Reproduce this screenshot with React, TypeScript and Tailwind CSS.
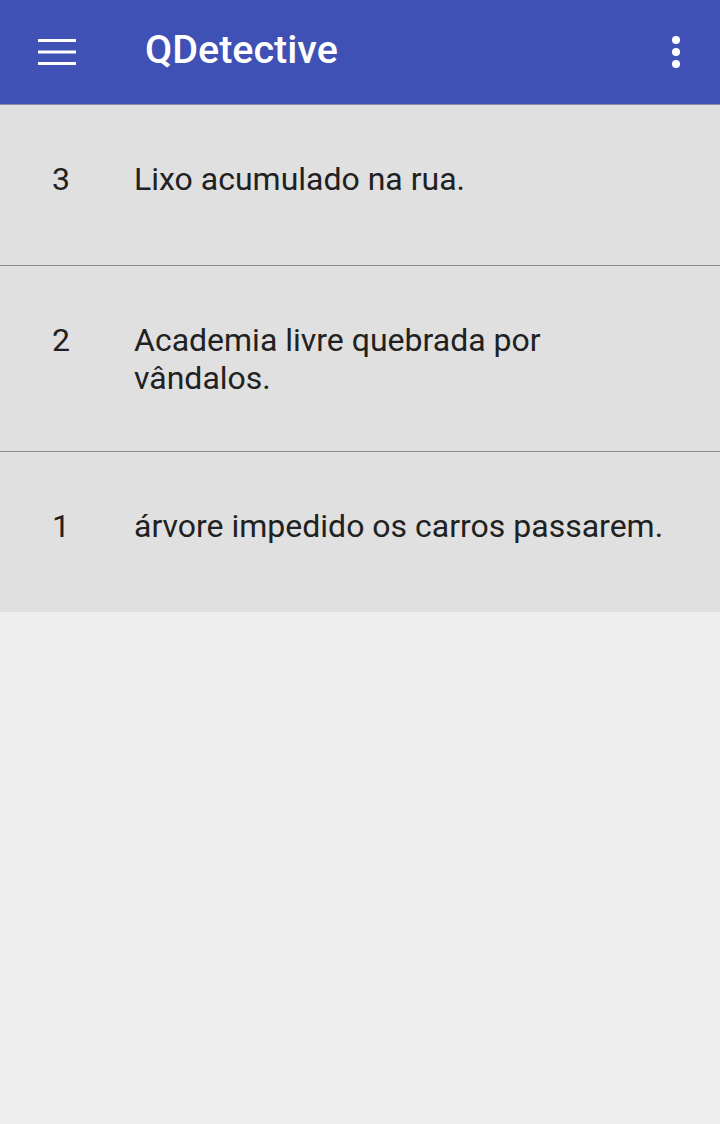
const items = [
  { id: 3, text: "Lixo acumulado na rua." },
  { id: 2, text: "Academia livre quebrada por vândalos." },
  { id: 1, text: "árvore impedido os carros passarem." },
];

const App = () => {
  return (
    <div
      className="min-h-[1124px] bg-[#eeeeee]"
      style={{ fontFamily: "Roboto, 'Noto Sans', sans-serif" }}
    >
      <div className="h-[105px] bg-[#3f51b5] flex items-center border-b border-[#8a8fa8]">
        <div className="w-[112px] pl-[38px] flex items-center">
          <svg width="38" height="26" viewBox="0 0 38 26">
            <rect x="0" y="0" width="38" height="3" fill="#fff" />
            <rect x="0" y="11.5" width="38" height="3" fill="#fff" />
            <rect x="0" y="23" width="38" height="3" fill="#fff" />
          </svg>
        </div>
        <p className="ml-[33px] flex-1 text-white text-[39.5px] font-medium leading-none pb-[4px]">
          QDetective
        </p>
        <div className="pr-[40px]">
          <svg width="8" height="32" viewBox="0 0 8 32">
            <circle cx="4" cy="4" r="4" fill="#fff" />
            <circle cx="4" cy="16" r="4" fill="#fff" />
            <circle cx="4" cy="28" r="4" fill="#fff" />
          </svg>
        </div>
      </div>
      <div>
        {items.map((item, i) => (
          <div
            key={item.id}
            className={
              "bg-[#e0e0e0] pt-[55px] pb-[54px] flex items-start text-[#212121] text-[32px] leading-[38px] " +
              (i < items.length - 1 ? "min-h-[161px] border-b border-[#8c8c8c]" : "min-h-[160px]")
            }
          >
            <span className="w-[134px] pl-[52px] shrink-0">{item.id}</span>
            <p className="flex-1 pr-[46px]">{item.text}</p>
          </div>
        ))}
      </div>
    </div>
  );
};

export default App;
